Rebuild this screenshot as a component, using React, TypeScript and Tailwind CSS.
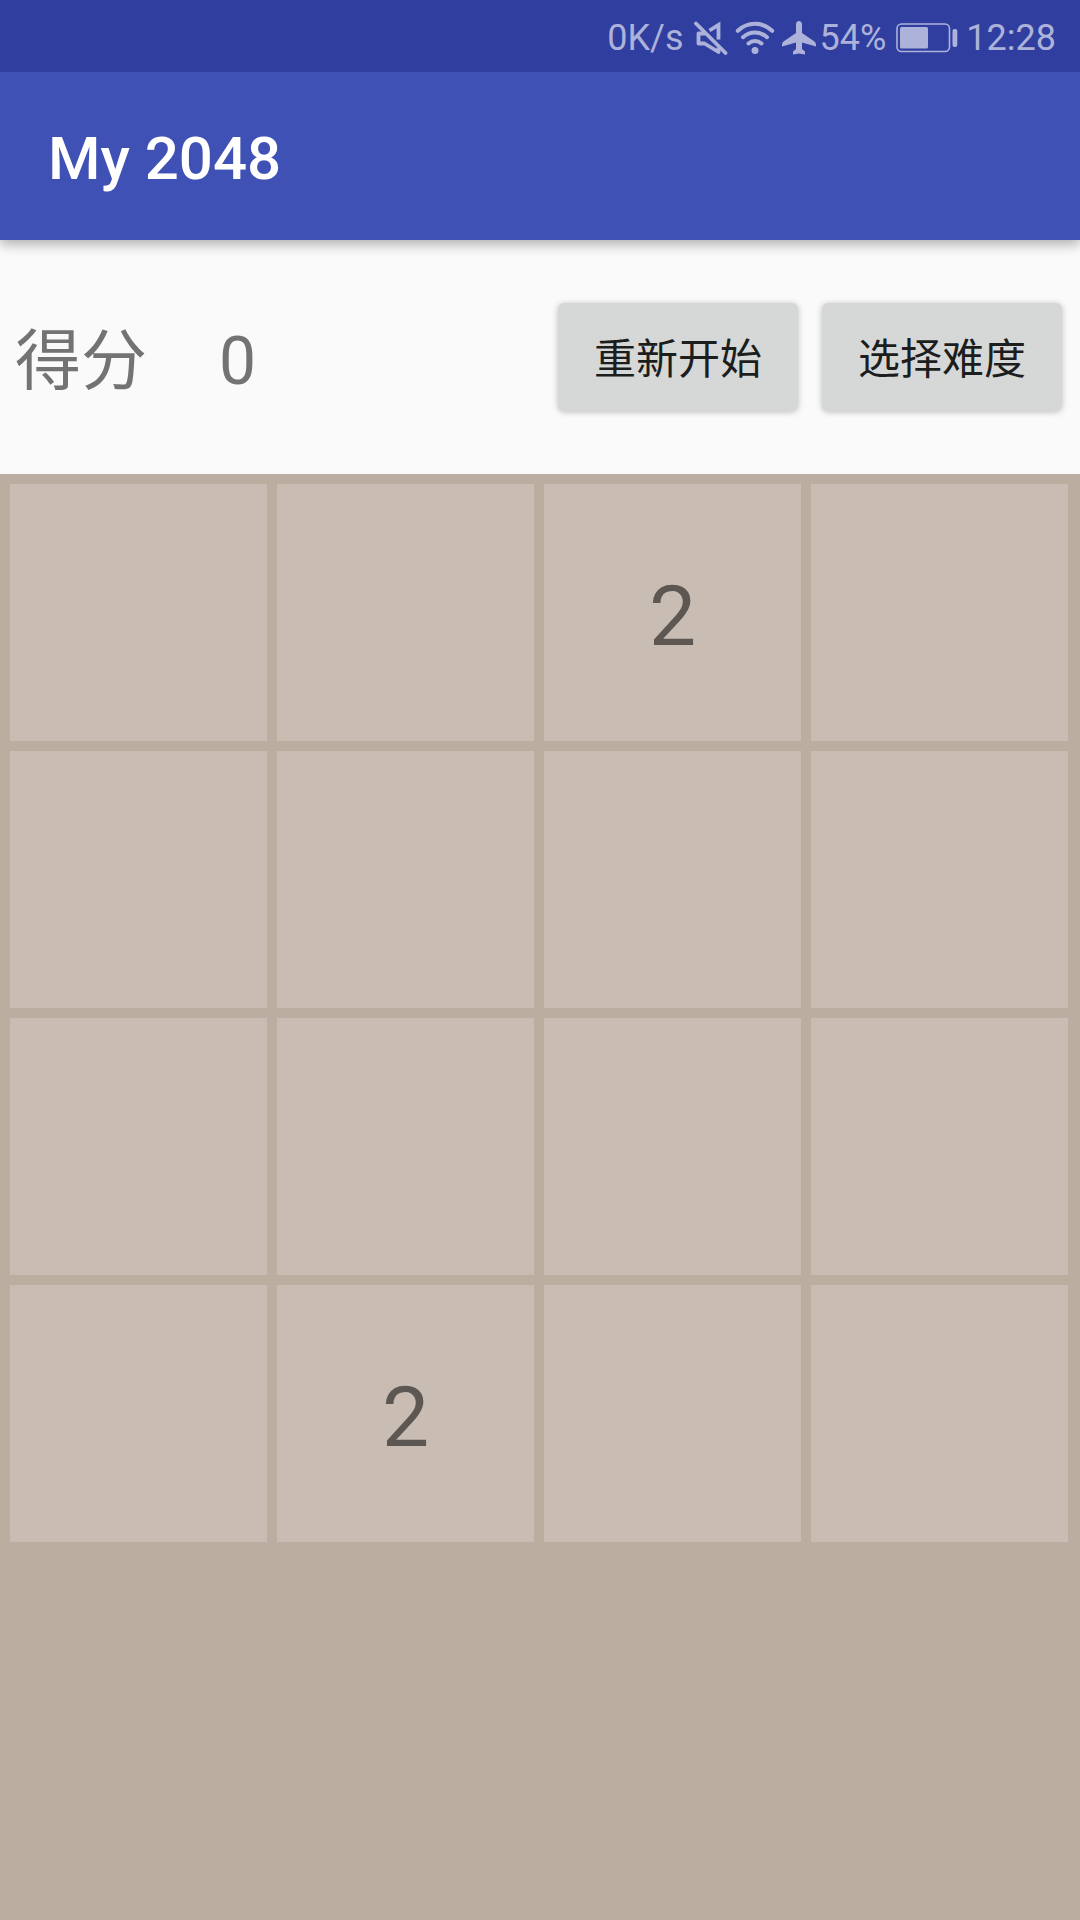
const SIZE = 4;

const board: number[][] = [
  [0, 0, 2, 0],
  [0, 0, 0, 0],
  [0, 0, 0, 0],
  [0, 2, 0, 0],
];

function MutedIcon() {
  return (
    <svg width="34" height="34" viewBox="0 0 34 34" fill="none" stroke="currentColor" strokeWidth="3.8" aria-label="Muted">
      <path d="M2 2.500 31.500 32" strokeLinecap="round" />
      <path d="M11 12.500H4.500V22.500H10.500L24.500 31V26.500" strokeLinejoin="round" />
      <path d="M15.500 9.500 24.500 4V18.500" />
    </svg>
  );
}

function WifiIcon() {
  return (
    <svg width="40" height="34" viewBox="0 0 40 34" fill="none" stroke="currentColor" strokeWidth="4" strokeLinecap="round" aria-label="Wi-Fi">
      <path d="M2.800 9.800C12.500 0.500 27.500 0.500 37.200 9.800" />
      <path d="M8 16.200C15 10 25 10 32 16.200" />
      <path d="M13.500 22.500C17.200 19.300 22.800 19.300 26.500 22.500" />
      <circle cx="20" cy="29.500" r="3.500" fill="currentColor" stroke="none" />
    </svg>
  );
}

function AirplaneIcon() {
  return (
    <svg width="34" height="34" viewBox="0 0 34 34" fill="currentColor" aria-label="Airplane mode">
      <path d="M17 0C18.800 0 20 1.500 20 3.500V12L32.500 20.500Q34 21.800 34 24V25.500L20 21.500V28L23 30.500V33.500L17 32.500L11 33.500V30.500L14 28V21.500L0 25.500V24Q0 21.800 1.500 20.500L14 12V3.500C14 1.500 15.200 0 17 0Z" />
    </svg>
  );
}

function BatteryIcon() {
  return (
    <svg width="62" height="30" viewBox="0 0 62 30" fill="none" aria-label="Battery">
      <rect x="1" y="1" width="52.500" height="27.500" rx="4.500" stroke="currentColor" strokeWidth="1.600" />
      <rect x="4" y="4" width="28" height="21.500" rx="1.500" fill="currentColor" />
      <rect x="56.500" y="6" width="4.800" height="18" rx="2" fill="currentColor" />
    </svg>
  );
}

function StatusBar() {
  return (
    <div className="relative z-10 flex h-[72px] items-center justify-end bg-[#303f9f] pr-6 pt-[3px] text-[36px] leading-10 text-[#acb2d9]">
      <span className="mr-2.5">0K/s</span>
      <MutedIcon />
      <span className="mx-[7px] flex">
        <WifiIcon />
      </span>
      <AirplaneIcon />
      <span className="ml-1 mr-2.5">54%</span>
      <BatteryIcon />
      <time className="ml-2">12:28</time>
    </div>
  );
}

function ActionButton({ label }: { label: string }) {
  return (
    <button
      type="button"
      className="h-[108px] w-60 rounded-md bg-[#d6d8d7] pt-1.5 text-[42px] leading-none text-[#1c1d1d] shadow-[0_1px_6px_rgba(0,0,0,0.25)]"
    >
      {label}
    </button>
  );
}

export default function App() {
  return (
    <div className="flex min-h-screen flex-col bg-[#fafafa] font-['Roboto','Noto_Sans_CJK_SC',sans-serif]">
      <StatusBar />
      <header className="flex h-[168px] items-center bg-[#3f51b5] px-12 pt-1.5 shadow-[0_4px_12px_rgba(0,0,0,0.32)]">
        <h1 className="text-[60px] font-medium leading-none text-white">My 2048</h1>
      </header>
      <section className="flex h-[234px] items-center justify-between pl-[15px] pr-[18px]">
        <p className="flex items-center gap-[72px] pt-2.5 text-[66px] leading-none text-[#737373]">
          <span>得分</span>
          <span>0</span>
        </p>
        <div className="flex gap-6">
          <ActionButton label="重新开始" />
          <ActionButton label="选择难度" />
        </div>
      </section>
      <main className="flex-1 bg-[#bbada0] py-2.5 pl-2.5 pr-3">
        <div className="grid grid-cols-4 gap-2.5">
          {board.flat().map((value, i) => (
            <div
              key={`${Math.floor(i / SIZE)}-${i % SIZE}`}
              className="flex aspect-square items-center justify-center bg-[#c9bdb3] pt-2 text-[84px] leading-none text-[#5c5752]"
            >
              {value > 0 ? value : null}
            </div>
          ))}
        </div>
      </main>
    </div>
  );
}
